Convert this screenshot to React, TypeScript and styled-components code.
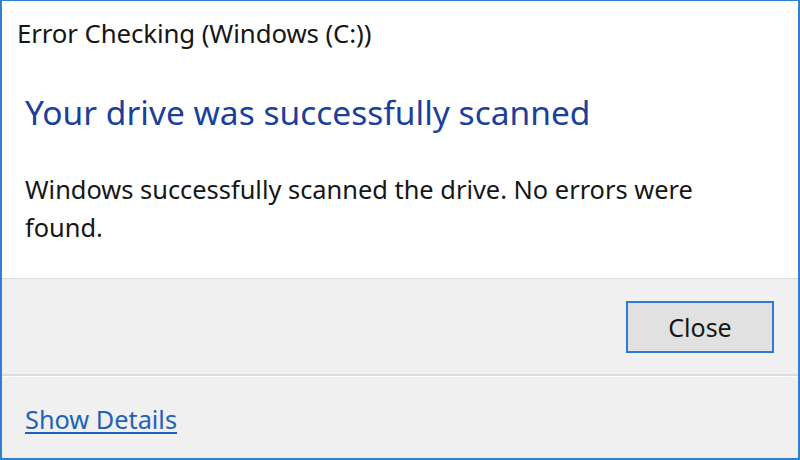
import React from "react";
import styled, { createGlobalStyle } from "styled-components";

const GlobalStyle = createGlobalStyle`
  html, body {
    margin: 0;
    padding: 0;
    background: #ffffff;
  }
  * {
    box-sizing: border-box;
  }
`;

const Window = styled.div`
  width: 800px;
  height: 460px;
  display: flex;
  flex-direction: column;
  border: 2px solid #2f80d3;
  border-top-width: 1px;
  background: #f0f0f0;
  font-family: "Noto Sans", "Open Sans", sans-serif;
  color: #111111;
  overflow: hidden;
`;

const Content = styled.div`
  height: 278px;
  background: #ffffff;
  border-bottom: 1px solid #dcdcdc;
  padding: 14px 0 0 15px;
  display: flex;
  flex-direction: column;
`;

const Title = styled.div`
  font-size: 25.8px;
  line-height: 36px;
  letter-spacing: -0.1px;
  color: #161616;
`;

const Heading = styled.h1`
  margin: 39px 0 0 8px;
  font-weight: 400;
  font-size: 33.5px;
  line-height: 44px;
  color: #1b3f9c;
`;

const Message = styled.p`
  margin: 36px 0 0 8px;
  width: 720px;
  font-size: 25.4px;
  line-height: 38px;
  color: #161616;
`;

const ButtonBar = styled.div`
  height: 97px;
  display: flex;
  align-items: center;
  justify-content: flex-end;
  padding: 0 24px 0 0;
  border-bottom: 2px solid #dcdcdc;
`;

const Button = styled.button`
  width: 148px;
  height: 52px;
  background: #e1e1e1;
  border: 2px solid #2c7ad6;
  font-family: inherit;
  font-size: 25px;
  color: #161616;
  cursor: pointer;
`;

const Footer = styled.div`
  flex: 1;
  border-top: 1px solid #ffffff;
  display: flex;
  align-items: center;
  padding: 2px 0 0 23px;
`;

const DetailsLink = styled.a`
  font-size: 25.3px;
  color: #1f62b8;
  text-decoration: underline;
  text-underline-offset: 3px;
  cursor: pointer;
`;

export default function App() {
  return (
    <>
      <GlobalStyle />
      <Window>
        <Content>
          <Title>Error Checking (Windows (C:))</Title>
          <Heading>Your drive was successfully scanned</Heading>
          <Message>
            Windows successfully scanned the drive. No errors were found.
          </Message>
        </Content>
        <ButtonBar>
          <Button>Close</Button>
        </ButtonBar>
        <Footer>
          <DetailsLink>Show Details</DetailsLink>
        </Footer>
      </Window>
    </>
  );
}
